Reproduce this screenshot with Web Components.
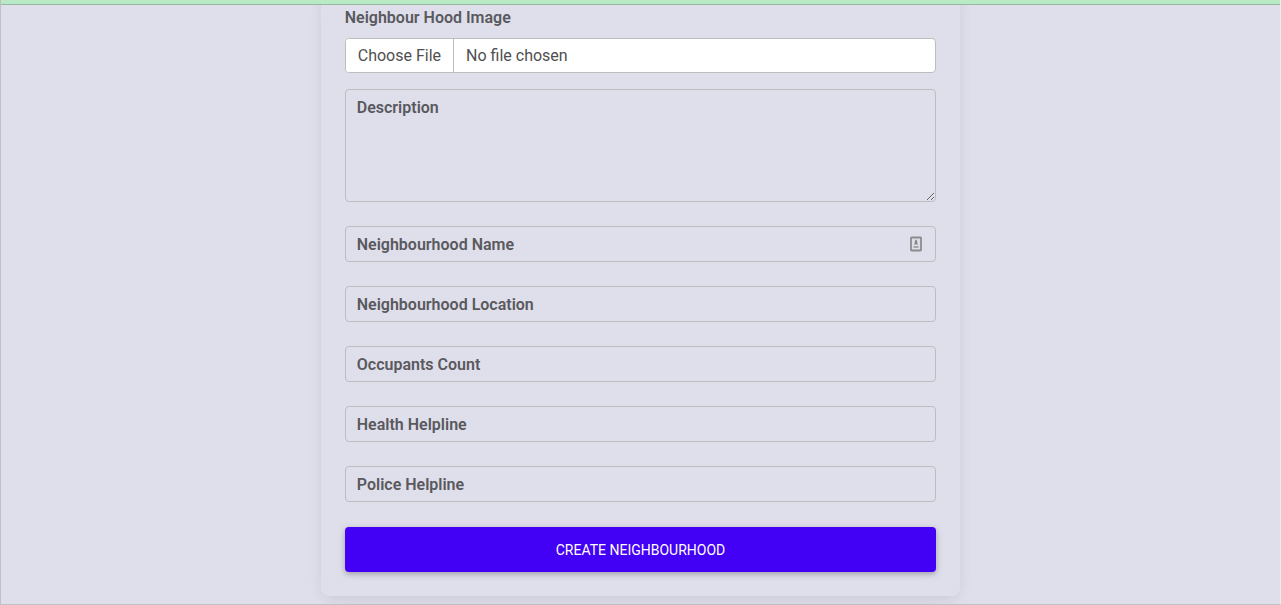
<!DOCTYPE html>
<html lang="en">
<head>
<meta charset="utf-8">
<title>Create Neighbourhood</title>
<style>
  html, body { margin: 0; }
  body { background: #dfdfeb; color: #59595e; font: 400 16px/24px "Roboto", "Liberation Sans", sans-serif; }
</style>
</head>
<body>
<page-frame>
  <form-card>
    <file-field label="Neighbour Hood Image"></file-field>
    <text-area-field label="Description"></text-area-field>
    <text-field label="Neighbourhood Name" autofill></text-field>
    <text-field label="Neighbourhood Location"></text-field>
    <text-field label="Occupants Count"></text-field>
    <text-field label="Health Helpline"></text-field>
    <text-field label="Police Helpline"></text-field>
    <submit-button>Create Neighbourhood</submit-button>
  </form-card>
</page-frame>
<script>
class BaseElement extends HTMLElement {
  constructor() {
    super();
    this.attachShadow({ mode: 'open' });
  }
  connectedCallback() {
    this.shadowRoot.innerHTML = '<style>*{box-sizing:border-box}' + this.css() + '</style>' + this.html();
  }
  get label() { return this.getAttribute('label') || ''; }
}

customElements.define('page-frame', class extends BaseElement {
  css() { return `
    :host { display: flex; flex-direction: column; box-sizing: border-box; min-height: 100vh; overflow: hidden;
      border: 1px solid #bfbfc4; border-top: 0; border-right-color: #ebebf0; }
    header { height: 5px; background: #b9e9c5; border-bottom: 1px solid #94b8a0; position: relative; z-index: 1; }
    main { display: flex; justify-content: center; padding-bottom: 8px; }`; }
  html() { return '<header></header><main><slot></slot></main>'; }
});

customElements.define('form-card', class extends BaseElement {
  css() { return `
    :host { display: block; box-sizing: border-box; width: 50%; margin-top: -23px; padding: 24px; border-radius: 8px;
      background: #dfdfeb; box-shadow: 0 2px 15px -3px rgba(0,0,0,.07), 0 10px 20px -2px rgba(0,0,0,.04); }
    form { display: flex; flex-direction: column; gap: 24px; }`; }
  html() { return '<form><slot></slot></form>'; }
});

customElements.define('file-field', class extends BaseElement {
  css() { return `
    :host { display: block; margin-bottom: -8px; }
    label { display: block; font-weight: 600; margin-bottom: 8px; }
    input { display: block; width: 100%; height: 35px; padding: 5px 12px; border: 1px solid #bdbdbd; border-radius: 4px;
      background: #fff; color: #4f4f4f; font: inherit; overflow: hidden; }
    input::file-selector-button { margin: -5px 12px -5px -12px; padding: 5px 12px; border: 0; border-right: 1px solid #bdbdbd;
      background: #fff; color: inherit; font: inherit; }`; }
  html() { return `<label for="f">${this.label}</label><input id="f" type="file">`; }
});

const outline = `
  :host { display: grid; }
  label, input, textarea { grid-area: 1 / 1; }
  label { padding: 7px 12px 5px; font-weight: 600; pointer-events: none; }
  input, textarea { display: block; width: 100%; margin: 0; padding: 5px 12px; border: 1px solid #bdbdbd; border-radius: 4px;
    background: transparent; color: inherit; font: inherit; }
  :is(input, textarea):not(:placeholder-shown) + label { visibility: hidden; }`;

customElements.define('text-area-field', class extends BaseElement {
  css() { return outline + 'textarea { height: 113px; resize: vertical; }'; }
  html() { return `<textarea id="t" placeholder=" "></textarea><label for="t">${this.label}</label>`; }
});

customElements.define('text-field', class extends BaseElement {
  css() { return outline + `
    input { height: 36px; }
    svg { grid-area: 1 / 1; place-self: center end; margin-right: 13px; }`; }
  html() {
    const icon = this.hasAttribute('autofill') ? `
      <svg width="14" height="16" viewBox="0 0 14 16" aria-hidden="true">
        <rect x="2" y="1.5" width="10" height="13" rx=".5" fill="#dedee6" stroke="#8b8b8f" stroke-width="1.8"/>
        <path d="M7 3.5 8.2 5v2.2l1 1.3H4.8l1-1.3V5Z" fill="#85858a"/>
        <path d="M4.5 10h5v2h-5z" fill="#a5a5aa"/>
      </svg>` : '';
    return `<input id="i" type="text" placeholder=" "><label for="i">${this.label}</label>${icon}`;
  }
});

customElements.define('submit-button', class extends BaseElement {
  css() { return `
    :host { display: block; padding-top: 1px; }
    button { display: block; width: 100%; padding: 11px 24px 10px; border: 0; border-radius: 4px; background: #4200f5; color: #fff;
      font: inherit; font-size: 14px; line-height: 24px; text-transform: uppercase;
      box-shadow: 0 2px 5px rgba(0,0,0,.2), 0 2px 10px rgba(0,0,0,.1); }`; }
  html() { return '<button type="submit"><slot></slot></button>'; }
});
</script>
</body>
</html>
